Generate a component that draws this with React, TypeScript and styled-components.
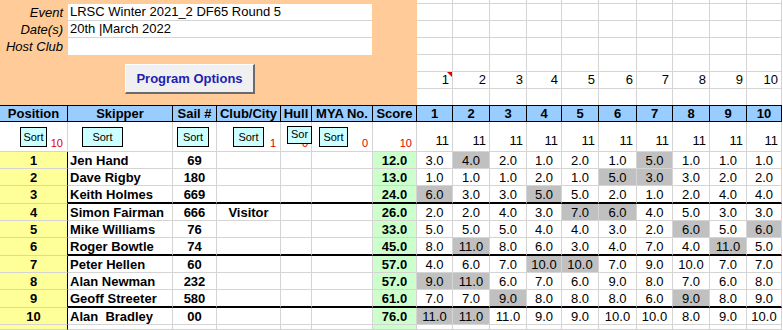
import React from "react";
import styled, { createGlobalStyle, css } from "styled-components";

type Entry = {
    pos: number;
    name: string;
    sail: string;
    club: string;
    score: string;
    races: Array<number>;
    drops: Array<number>;
};

const GRID = "#d4d4d4";

// column widths taken from the sheet: 7 fixed columns then 10 races
const COLS = [68, 105, 44, 64, 31, 61, 44, 36, 37, 37, 35, 37, 38, 36, 37, 37, 35];
const ROWS = [4, 17, 17, 17, 17, 17, 16, 17, 30, 17, 17, 18, 17, 17, 18, 17, 17, 18, 17, 5];

const entries: Array<Entry> = [
    { pos: 1, name: "Jen Hand", sail: "69", club: "", score: "12.0", races: [3, 4, 2, 1, 2, 1, 5, 1, 1, 1], drops: [1, 6] },
    { pos: 2, name: "Dave Rigby", sail: "180", club: "", score: "13.0", races: [1, 1, 1, 2, 1, 5, 3, 3, 2, 2], drops: [5, 6] },
    { pos: 3, name: "Keith Holmes", sail: "669", club: "", score: "24.0", races: [6, 3, 3, 5, 5, 2, 1, 2, 4, 4], drops: [0, 3] },
    { pos: 4, name: "Simon Fairman", sail: "666", club: "Visitor", score: "26.0", races: [2, 2, 4, 3, 7, 6, 4, 5, 3, 3], drops: [4, 5] },
    { pos: 5, name: "Mike Williams", sail: "76", club: "", score: "33.0", races: [5, 5, 5, 4, 4, 3, 2, 6, 5, 6], drops: [7, 9] },
    { pos: 6, name: "Roger Bowtle", sail: "74", club: "", score: "45.0", races: [8, 11, 8, 6, 3, 4, 7, 4, 11, 5], drops: [1, 8] },
    { pos: 7, name: "Peter Hellen", sail: "60", club: "", score: "57.0", races: [4, 6, 7, 10, 10, 7, 9, 10, 7, 7], drops: [3, 4] },
    { pos: 8, name: "Alan Newman", sail: "232", club: "", score: "57.0", races: [9, 11, 6, 7, 6, 9, 8, 7, 6, 8], drops: [0, 1] },
    { pos: 9, name: "Geoff Streeter", sail: "580", club: "", score: "61.0", races: [7, 7, 9, 8, 8, 8, 6, 9, 8, 9], drops: [2, 7] },
    { pos: 10, name: "Alan  Bradley", sail: "00", club: "", score: "76.0", races: [11, 11, 11, 9, 9, 10, 10, 8, 9, 10], drops: [0, 1] }
];

const raceNums = [1, 2, 3, 4, 5, 6, 7, 8, 9, 10];

const GlobalStyle = createGlobalStyle`
    html, body {
        margin: 0;
        padding: 0;
        overflow: hidden;
        background: #fff;
    }
    body {
        font-family: "Liberation Sans", Arial, sans-serif;
        color: #000;
    }
    * {
        box-sizing: border-box;
    }
`;

const Sheet = styled.div`
    display: grid;
    grid-template-columns: ${COLS.map((c) => `${c}px`).join(" ")};
    grid-template-rows: ${ROWS.map((r) => `${r}px`).join(" ")};
    width: 783px;
`;

const EventPanel = styled.div`
    grid-column: 1 / 8;
    grid-row: 1 / 8;
    background: #ffcc99;
    padding-top: 4px;
    display: flex;
    flex-direction: column;
`;

const InfoGrid = styled.div`
    display: grid;
    grid-template-columns: 68px 304px;
    grid-template-rows: repeat(3, 17px);
`;

const InfoLabel = styled.div`
    font-size: 13px;
    font-style: italic;
    text-align: right;
    padding-right: 5px;
    line-height: 17px;
`;

const InfoValue = styled.div<{ $last?: boolean }>`
    background: #fff;
    font-size: 13px;
    line-height: 16px;
    padding-left: 2px;
    border-bottom: ${(p) => (p.$last ? "none" : `1px solid ${GRID}`)};
`;

const OptionsButton = styled.button`
    margin: 9px 0 0 125px;
    width: 130px;
    height: 30px;
    background: #f0f0f0;
    border-top: 1px solid #fff;
    border-left: 1px solid #fff;
    border-right: 2px solid #6b6b6b;
    border-bottom: 2px solid #6b6b6b;
    font-family: "Liberation Sans", Arial, sans-serif;
    font-weight: bold;
    font-size: 13px;
    color: #1e1eb0;
    padding: 0;
`;

const TopCell = styled.div<{ $line: boolean }>`
    border-right: 1px solid ${GRID};
    border-bottom: ${(p) => (p.$line ? `1px solid ${GRID}` : "none")};
    font-size: 13px;
    text-align: right;
    padding-right: 3px;
    line-height: 16px;
    position: relative;
`;

const CommentMark = styled.span`
    position: absolute;
    top: 0;
    right: 0;
    width: 0;
    height: 0;
    border-top: 5px solid #e00000;
    border-left: 5px solid transparent;
`;

const HeadCell = styled.div`
    background: #99ccff;
    border-top: 1px solid #000;
    border-bottom: 1px solid #000;
    border-right: 1px solid #000;
    font-weight: bold;
    font-size: 13px;
    text-align: center;
    line-height: 15px;
    white-space: nowrap;
    overflow: hidden;
`;

const SortCell = styled.div`
    display: grid;
    grid-template-areas: "slot";
    border-right: 1px solid ${GRID};
    border-bottom: 1px solid ${GRID};
    & > * {
        grid-area: slot;
    }
`;

const SortButton = styled.div<{ $left: number; $width: number; $raised?: boolean }>`
    justify-self: start;
    align-self: start;
    margin-left: ${(p) => p.$left}px;
    margin-top: ${(p) => (p.$raised ? 4 : 5)}px;
    width: ${(p) => p.$width}px;
    height: ${(p) => (p.$raised ? 18 : 20)}px;
    background: #ccffff;
    border: 1px solid #000;
    font-size: 11px;
    display: flex;
    justify-content: center;
    align-items: ${(p) => (p.$raised ? "flex-start" : "center")};
    padding-top: ${(p) => (p.$raised ? 1 : 0)}px;
    line-height: 12px;
    overflow: hidden;
`;

const Count = styled.span`
    justify-self: end;
    align-self: end;
    color: #dd0000;
    font-size: 11px;
    padding: 0 4px 2px 0;
`;

const RaceCount = styled.span`
    justify-self: end;
    align-self: end;
    font-size: 13px;
    padding: 0 3px 3px 0;
`;

const DataCell = styled.div<{
    $bg?: string;
    $align?: "left" | "center";
    $bold?: boolean;
    $thick?: boolean;
    $edge?: boolean;
}>`
    background: ${(p) => p.$bg ?? "#fff"};
    border-right: 1px solid ${(p) => (p.$edge ? "#000" : GRID)};
    border-bottom: ${(p) => (p.$thick ? "2px solid #000" : `1px solid ${GRID}`)};
    font-size: 13px;
    font-weight: ${(p) => (p.$bold ? "bold" : "normal")};
    text-align: ${(p) => p.$align ?? "center"};
    white-space: pre;
    overflow: hidden;
    display: flex;
    align-items: center;
    justify-content: ${(p) => (p.$align === "left" ? "flex-start" : "center")};
    ${(p) =>
        p.$align === "left" &&
        css`
            padding-left: 2px;
        `}
`;

const YELLOW = "#ffff99";
const GREEN = "#ccffcc";
const DROP = "#c0c0c0";

const headers = ["Position", "Skipper", "Sail #", "Club/City", "Hull", "MYA No.", "Score"];

function renderTopRows(): Array<JSX.Element> {
    const cells: Array<JSX.Element> = [];
    for (let r = 0; r < 7; r++) {
        for (let c = 0; c < 10; c++) {
            cells.push(
                <TopCell key={`top-${r}-${c}`} $line={r < 6} style={{ gridRow: r + 1, gridColumn: c + 8 }}>
                    {r === 5 && raceNums[c]}
                    {r === 5 && c === 0 && <CommentMark />}
                </TopCell>
            );
        }
    }
    return cells;
}

function renderRow(e: Entry | null, i: number): Array<JSX.Element> {
    const thick = i === 2 || i === 5 || i === 8;
    const k = `r${i}`;
    return [
        <DataCell key={`${k}-pos`} $bg={YELLOW} $bold $edge>
            {e?.pos}
        </DataCell>,
        <DataCell key={`${k}-name`} $align="left" $bold $thick={thick}>
            {e?.name}
        </DataCell>,
        <DataCell key={`${k}-sail`} $bold $thick={thick}>
            {e?.sail}
        </DataCell>,
        <DataCell key={`${k}-club`} $bold $thick={thick}>
            {e?.club}
        </DataCell>,
        <DataCell key={`${k}-hull`} $thick={thick} />,
        <DataCell key={`${k}-mya`} $thick={thick} />,
        <DataCell key={`${k}-score`} $bg={GREEN} $bold $thick={thick}>
            {e?.score}
        </DataCell>,
        ...raceNums.map((_, c) => (
            <DataCell
                key={`${k}-race-${c}`}
                $thick={thick}
                $bg={e && e.drops.includes(c) ? DROP : undefined}
            >
                {e ? e.races[c].toFixed(1) : ""}
            </DataCell>
        ))
    ];
}

export default function App(): JSX.Element {
    return (
        <Sheet>
            <GlobalStyle />
            <EventPanel>
                <InfoGrid>
                    <InfoLabel>Event</InfoLabel>
                    <InfoValue>LRSC Winter 2021_2 DF65 Round 5</InfoValue>
                    <InfoLabel>Date(s)</InfoLabel>
                    <InfoValue>20th |March 2022</InfoValue>
                    <InfoLabel>Host Club</InfoLabel>
                    <InfoValue $last />
                </InfoGrid>
                <OptionsButton>Program Options</OptionsButton>
            </EventPanel>
            {renderTopRows()}

            {headers.map((h) => (
                <HeadCell key={h} style={{ gridRow: 8 }}>
                    {h}
                </HeadCell>
            ))}
            {raceNums.map((n) => (
                <HeadCell key={`h${n}`} style={{ gridRow: 8 }}>
                    {n}
                </HeadCell>
            ))}

            <SortCell>
                <SortButton $left={20} $width={27}>Sort</SortButton>
                <Count>10</Count>
            </SortCell>
            <SortCell>
                <SortButton $left={14} $width={41}>Sort</SortButton>
            </SortCell>
            <SortCell>
                <SortButton $left={4} $width={32}>Sort</SortButton>
            </SortCell>
            <SortCell>
                <SortButton $left={16} $width={31}>Sort</SortButton>
                <Count>1</Count>
            </SortCell>
            <SortCell>
                <Count>0</Count>
                <SortButton $left={6} $width={25} $raised>Sor</SortButton>
            </SortCell>
            <SortCell>
                <SortButton $left={7} $width={29}>Sort</SortButton>
                <Count>0</Count>
            </SortCell>
            <SortCell>
                <Count>10</Count>
            </SortCell>
            {raceNums.map((n) => (
                <SortCell key={`s${n}`}>
                    <RaceCount>11</RaceCount>
                </SortCell>
            ))}

            {entries.map((e, i) => renderRow(e, i))}
            {renderRow(null, 10)}
        </Sheet>
    );
}
